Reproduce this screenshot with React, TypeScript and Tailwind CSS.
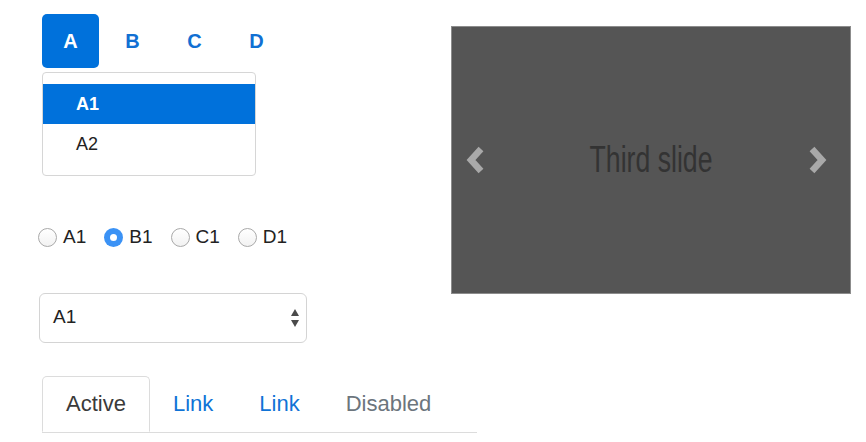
import React from 'react';

const pills = ['A', 'B', 'C', 'D'];
const radios = ['A1', 'B1', 'C1', 'D1'];
const tabs = [
  { label: 'Active', kind: 'active' },
  { label: 'Link', kind: 'link' },
  { label: 'Link', kind: 'link' },
  { label: 'Disabled', kind: 'disabled' },
];

function Radio({ label, checked }: { label: string; checked?: boolean }) {
  return (
    <label className="flex items-center gap-[6px]">
      {checked ? (
        <span className="flex h-[19px] w-[19px] items-center justify-center rounded-full bg-[#3b92f5]">
          <span className="h-[7px] w-[7px] rounded-full bg-white" />
        </span>
      ) : (
        <span className="h-[19px] w-[19px] rounded-full border border-[#a9a9a9] bg-gradient-to-b from-white to-[#f2f2f2]" />
      )}
      <span className="text-[19px] text-[#222]">{label}</span>
    </label>
  );
}

function Chevron({ dir }: { dir: 'left' | 'right' }) {
  return (
    <svg width="20" height="28" viewBox="0 0 20 28">
      <polyline
        points={dir === 'left' ? '15,3 5,14 15,25' : '5,3 15,14 5,25'}
        fill="none"
        stroke="#a9a9a9"
        strokeWidth="6.5"
        strokeLinejoin="miter"
      />
    </svg>
  );
}

export default function App() {
  return (
    <main
      className="flex h-[442px] w-[866px] overflow-hidden bg-white"
      style={{ fontFamily: '"Liberation Sans", Arial, sans-serif' }}
    >
      {/* left column */}
      <div className="flex w-[451px] flex-col pl-[38px]">
        {/* pills + dropdown */}
        <div className="ml-[4px] mt-[14px] flex gap-[5px]">
          {pills.map((p, i) => (
            <a
              key={p}
              className={
                'flex h-[54px] w-[57px] items-center justify-center rounded-[5px] text-[20px] font-semibold ' +
                (i === 0 ? 'bg-[#0071db] text-white' : 'text-[#1170d3]')
              }
            >
              {p}
            </a>
          ))}
        </div>
        <div className="ml-[4px] mt-[4px] w-[214px] rounded-[4px] border border-[#d6d6d6] pb-[11px] pt-[11px]">
          <div className="flex h-[40px] items-center bg-[#0071db] pl-[33px] text-[18px] font-semibold text-white">
            A1
          </div>
          <div className="flex h-[40px] items-center pl-[33px] text-[18px] text-[#222]">A2</div>
        </div>

        {/* radios */}
        <div className="mt-[47px] flex items-center gap-[18px]">
          {radios.map((r) => (
            <Radio key={r} label={r} checked={r === 'B1'} />
          ))}
        </div>

        {/* select */}
        <div className="ml-[1px] mt-[41px] flex h-[50px] w-[268px] items-center justify-between rounded-[6px] border border-[#d4d4d4] pl-[13px] pr-[6px] text-[19px] text-[#222]">
          <span>A1</span>
          <svg width="10" height="20" viewBox="0 0 10 20">
            <path d="M5 1 L9 8 L1 8 Z" fill="#4a4a4a" />
            <path d="M1 12 L9 12 L5 19 Z" fill="#4a4a4a" />
          </svg>
        </div>

        {/* tabs */}
        <div className="ml-[4px] mt-[33px] flex w-[435px] border-b border-[#dcdcdc]">
          {tabs.map((t, i) => (
            <a
              key={i}
              className={
                'flex h-[56px] items-center px-[23px] text-[22px] ' +
                (t.kind === 'active'
                  ? '-mb-px rounded-t-[5px] border border-b-white border-[#dcdcdc] bg-white text-[#3a3a3a]'
                  : t.kind === 'link'
                  ? 'text-[#1073d6]'
                  : 'text-[#6c757d]')
              }
            >
              {t.label}
            </a>
          ))}
        </div>
      </div>

      {/* carousel */}
      <div className="relative mt-[26px] flex h-[268px] w-[400px] items-center justify-center border border-[#8c8c8c] bg-[#555]">
        <span className="inline-block scale-x-[0.74] text-[36px] text-[#333]">Third slide</span>
        <span className="absolute left-[14px] top-[119px]">
          <Chevron dir="left" />
        </span>
        <span className="absolute right-[23px] top-[119px]">
          <Chevron dir="right" />
        </span>
      </div>
    </main>
  );
}
